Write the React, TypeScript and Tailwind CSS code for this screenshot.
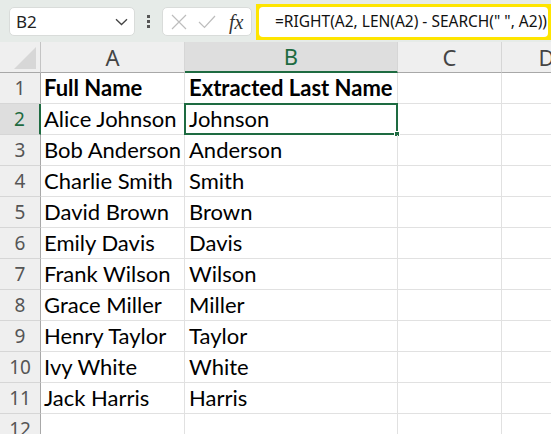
import React from "react";

const names = [
  ["Full Name", "Extracted Last Name"],
  ["Alice Johnson", "Johnson"],
  ["Bob Anderson", "Anderson"],
  ["Charlie Smith", "Smith"],
  ["David Brown", "Brown"],
  ["Emily Davis", "Davis"],
  ["Frank Wilson", "Wilson"],
  ["Grace Miller", "Miller"],
  ["Henry Taylor", "Taylor"],
  ["Ivy White", "White"],
  ["Jack Harris", "Harris"],
  ["", ""],
];

const cellFont = "font-['Lato','Liberation_Sans',sans-serif]";
const uiFont = "font-['Noto_Sans','Open_Sans',sans-serif]";

const Toolbar = () => (
  <div className="flex items-center h-[42px] bg-[#e6ebe8] pt-[1px]">
    {/* name box */}
    <div className="ml-[9px] w-[126px] h-[29px] shrink-0 bg-white border border-[#d9dcda] rounded-[5px] flex items-center justify-between pl-[6px] pr-[6px]">
      <span className={`${uiFont} text-[17px] text-[#222] leading-none`}>B2</span>
      <svg width="13" height="8" viewBox="0 0 13 8" fill="none">
        <path d="M1 1.2 L6.5 6.5 L12 1.2" stroke="#444" strokeWidth="1.3" />
      </svg>
    </div>
    {/* dots */}
    <div className="w-[27px] shrink-0 flex flex-col items-center gap-[2px]">
      <div className="w-[3px] h-[3px] bg-[#555]" />
      <div className="w-[3px] h-[3px] bg-[#555]" />
      <div className="w-[3px] h-[3px] bg-[#555]" />
    </div>
    {/* cancel / enter / fx */}
    <div className="w-[90px] h-[29px] shrink-0 bg-white border border-[#d9dcda] rounded-[5px] flex items-center pl-[8px]">
      <svg width="16" height="16" viewBox="0 0 16 16" fill="none">
        <path d="M1 1 L15 15 M15 1 L1 15" stroke="#bdbdbd" strokeWidth="1.2" />
      </svg>
      <svg width="18" height="14" viewBox="0 0 18 14" fill="none" className="ml-[11px]">
        <path d="M1 7 L6.5 12.5 L17 1" stroke="#bdbdbd" strokeWidth="1.2" />
      </svg>
      <span className="ml-[13px] font-['Liberation_Serif',serif] italic text-[20px] text-[#333] leading-none">
        fx
      </span>
    </div>
    {/* formula bar */}
    <div className="ml-[4px] flex-1 h-[36px] border-[3px] border-[#fee500] bg-[#fee500]">
      <div className="h-full bg-white rounded-[4px] flex items-center pl-[16px] whitespace-nowrap overflow-hidden">
        <span className={`${uiFont} text-[15.5px] text-[#111]`}>
          =RIGHT(A2, LEN(A2) - SEARCH(" ", A2))
        </span>
      </div>
    </div>
  </div>
);

const ColHeader = ({ label, w, selected }: { label: string; w: string; selected?: boolean }) => (
  <div
    className={`${w} shrink-0 h-full flex items-center justify-center border-r border-[#d6d6d6] ${
      selected ? "bg-[#dedede] text-[#1e6b41] border-b-2 border-b-[#1e6b41]" : "bg-[#efefef] text-[#444] border-b border-b-[#a8a8a8]"
    } ${uiFont} text-[22px]`}
  >
    {label}
  </div>
);

export default function App() {
  return (
    <div className="w-[551px] h-[434px] overflow-hidden bg-white">
      <Toolbar />
      {/* column headers */}
      <div className="flex h-[31px] bg-[#efefef]">
        <div className="w-[41px] shrink-0 h-full border-r border-[#c4c4c4] border-b border-b-[#a8a8a8] flex items-end justify-end pr-[4px] pb-[3px]">
          <svg width="22" height="22" viewBox="0 0 22 22">
            <polygon points="22,0 22,22 0,22" fill="#d7d7d7" />
          </svg>
        </div>
        <ColHeader label="A" w="w-[144px]" />
        <ColHeader label="B" w="w-[213px]" selected />
        <ColHeader label="C" w="w-[104px]" />
        <ColHeader label="D" w="w-[90px]" />
      </div>
      {/* rows */}
      {names.map(([a, b], i) => {
        const row = i + 1;
        const sel = row === 2;
        return (
          <div key={row} className="flex h-[31px]">
            <div
              className={`w-[41px] shrink-0 h-full flex items-center justify-center border-b border-[#d6d6d6] ${uiFont} text-[19px] ${
                sel
                  ? "bg-[#dedede] text-[#1e6b41] border-r-2 border-r-[#1e6b41]"
                  : "bg-[#efefef] text-[#555] border-r border-r-[#a8a8a8]"
              }`}
            >
              {row}
            </div>
            <div
              className={`w-[144px] shrink-0 h-full flex items-center pl-[3px] pb-[2px] border-r border-b border-[#e1e1e1] ${cellFont} text-[22px] text-black whitespace-nowrap ${
                row === 1 ? "font-bold" : ""
              }`}
            >
              {a}
            </div>
            <div
              className={`relative w-[213px] shrink-0 h-full flex items-center pl-[4px] pb-[2px] border-r border-b border-[#e1e1e1] ${cellFont} text-[22px] text-black whitespace-nowrap ${
                row === 1 ? "font-bold" : ""
              }`}
            >
              {b}
              {sel && (
                <>
                  <div className="absolute -top-[1px] -left-[1px] w-[214px] h-[32px] border-2 border-[#1e6b41]" />
                  <div className="absolute -bottom-[3px] -right-[3px] w-[6px] h-[6px] bg-[#1e6b41] border border-white" />
                </>
              )}
            </div>
            <div className="w-[104px] shrink-0 h-full border-r border-b border-[#e1e1e1]" />
            <div className="w-[90px] shrink-0 h-full border-b border-[#e1e1e1]" />
          </div>
        );
      })}
    </div>
  );
}
